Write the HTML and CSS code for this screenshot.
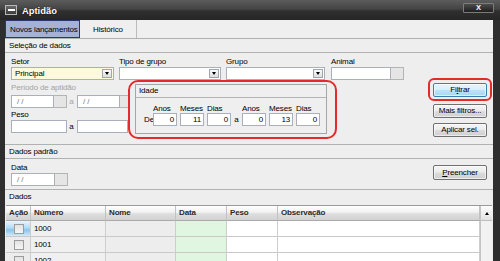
FILE: index.html
```html
<!DOCTYPE html>
<html lang="pt">
<head>
<meta charset="utf-8">
<title>Aptidão</title>
<link rel="stylesheet" href="styles.css">
</head>
<body>
<div class="window">
  <header class="titlebar">
    <span class="sysicon"><span class="sysbar"></span></span>
    <span class="title">Aptidão</span>
    <span class="closebtn">X</span>
  </header>
  <div class="frame">
    <main class="content">
      <nav class="tabs">
        <div class="tab active">Novos lançamentos</div>
        <div class="tab hist">Histórico</div>
      </nav>

      <div class="section-head">Seleção de dados</div>
      <section class="form">
        <div class="row1">
          <div class="field w-setor">
            <div class="lbl">Setor</div>
            <div class="input combo yellow"><span class="val">Principal</span><span class="dd"><span class="tri"></span></span></div>
          </div>
          <div class="field w-tipo">
            <div class="lbl">Tipo de grupo</div>
            <div class="input combo"><span class="val"></span><span class="dd"><span class="tri"></span></span></div>
          </div>
          <div class="field w-grupo">
            <div class="lbl">Grupo</div>
            <div class="input combo"><span class="val"></span><span class="dd"><span class="tri"></span></span></div>
          </div>
          <div class="field">
            <div class="lbl">Animal</div>
            <div class="inline"><div class="input w-animal"></div><div class="sbtn"></div></div>
          </div>
        </div>

        <div class="row2">
          <div class="leftcol">
            <div class="lbl disabled lbl-periodo">Período de aptidão</div>
            <div class="inline gap-top">
              <div class="input date w-date"><span class="val">/ /</span></div><div class="sbtn"></div>
              <span class="sep disabled">a</span>
              <div class="input date w-date"><span class="val">/ /</span></div><div class="sbtn narrow"></div>
            </div>
            <div class="lbl gap-top">Peso</div>
            <div class="inline">
              <div class="input w-peso1"></div>
              <span class="sep">a</span>
              <div class="input w-peso2"></div>
            </div>
          </div>

          <div class="highlight idade-hl">
            <div class="group">
              <div class="group-head">Idade</div>
              <div class="group-body">
                <span class="de">De</span>
                <div class="num"><div class="lbl2">Anos</div><div class="input numin">0</div></div>
                <div class="num"><div class="lbl2">Meses</div><div class="input numin">11</div></div>
                <div class="num"><div class="lbl2">Dias</div><div class="input numin">0</div></div>
                <span class="a-sep">a</span>
                <div class="num"><div class="lbl2">Anos</div><div class="input numin">0</div></div>
                <div class="num"><div class="lbl2">Meses</div><div class="input numin">13</div></div>
                <div class="num"><div class="lbl2">Dias</div><div class="input numin">0</div></div>
              </div>
            </div>
          </div>

          <div class="btncol">
            <div class="highlight filtrar-hl"><button class="btn primary">Fi<u>l</u>trar</button></div>
            <button class="btn btn-mais">Mais filtros...</button>
            <button class="btn btn-aplicar">Aplicar sel.</button>
          </div>
        </div>
      </section>

      <div class="section-head">Dados padrão</div>
      <section class="padrao">
        <div class="field">
          <div class="lbl">Data</div>
          <div class="inline"><div class="input date w-date2"><span class="val">/ /</span></div><div class="sbtn"></div></div>
        </div>
        <button class="btn btn-preencher"><u>P</u>reencher</button>
      </section>

      <div class="section-head nobottom">Dados</div>
      <section class="gridwrap">
        <div class="grid">
          <div class="hc">Ação</div>
          <div class="hc">Número</div>
          <div class="hc">Nome</div>
          <div class="hc">Data</div>
          <div class="hc">Peso</div>
          <div class="hc">Observação</div>

          <div class="c c-acao selected"><span class="chk"></span></div>
          <div class="c c-num">1000</div>
          <div class="c c-nome"></div>
          <div class="c c-data"></div>
          <div class="c c-peso"></div>
          <div class="c c-obs"></div>

          <div class="c c-acao"><span class="chk"></span></div>
          <div class="c c-num">1001</div>
          <div class="c c-nome"></div>
          <div class="c c-data"></div>
          <div class="c c-peso"></div>
          <div class="c c-obs"></div>

          <div class="c c-acao"><span class="chk"></span></div>
          <div class="c c-num">1002</div>
          <div class="c c-nome"></div>
          <div class="c c-data"></div>
          <div class="c c-peso"></div>
          <div class="c c-obs"></div>
        </div>
        <div class="vscroll">
          <div class="vs-up"><span class="uptri"></span></div>
        </div>
      </section>
    </main>
  </div>
</div>
</body>
</html>
```

FILE: styles.css
```css
* { box-sizing: border-box; }

html, body {
  margin: 0;
  padding: 0;
}

body {
  width: 500px;
  height: 261px;
  overflow: hidden;
  font-family: "Liberation Sans", Arial, sans-serif;
  font-size: 8px;
  letter-spacing: -0.15px;
  color: #000;
  background: #2e2e2e;
}

.window {
  width: 500px;
  height: 261px;
  display: flex;
  flex-direction: column;
  background: #2e2e2e;
}

/* ---------- title bar ---------- */
.titlebar {
  flex: none;
  height: 20px;
  display: flex;
  align-items: center;
  padding-left: 5px;
  background: linear-gradient(#5c5c5c, #444 45%, #2f2f2f 55%, #262626);
}

.sysicon {
  width: 12px;
  height: 10px;
  border: 1px solid #b8b8b8;
  background: linear-gradient(#6a6a6a, #3c3c3c);
  display: flex;
  align-items: center;
  justify-content: center;
}

.sysbar {
  width: 7px;
  height: 2px;
  background: #fff;
}

.title {
  margin-left: 5px;
  color: #fff;
  font-weight: bold;
  font-size: 9.4px;
  letter-spacing: 0;
  text-shadow: 0 0 1px #000;
}

.closebtn {
  margin-left: auto;
  margin-right: 6px;
  align-self: flex-start;
  margin-top: 3px;
  width: 31px;
  height: 10px;
  border: 1px solid #7c7c7c;
  border-radius: 1px;
  background: linear-gradient(#4d4d4d, #1e1e1e);
  color: #fff;
  font-weight: bold;
  font-size: 7.5px;
  line-height: 8px;
  text-align: center;
}

/* ---------- frame ---------- */
.frame {
  flex: 1;
  display: flex;
  min-height: 0;
  padding: 0 7px 0 5px;
  background: #2e2e2e;
}

.content {
  flex: 1;
  min-width: 0;
  display: flex;
  flex-direction: column;
  background: #eeeeee;
  overflow: hidden;
}

/* ---------- tabs ---------- */
.tabs {
  flex: none;
  height: 18px;
  display: flex;
  background: #efefef;
}

.tab {
  display: flex;
  align-items: center;
}

.tab.active {
  width: 75px;
  padding-left: 4px;
  border: 1px solid #27386e;
  background: #a5b2d5;
}

.tab.hist {
  width: 57px;
  justify-content: center;
  border-right: 1px solid #bcbcbc;
}

/* ---------- section heads ---------- */
.section-head {
  flex: none;
  height: 15px;
  line-height: 13px;
  padding-left: 4px;
  border-top: 1px solid #b1b1b1;
  border-bottom: 1px solid #b1b1b1;
  background: #eeeeee;
}

.section-head.nobottom {
  border-bottom: none;
  height: 16px;
  line-height: 14px;
}

/* ---------- form ---------- */
.form {
  flex: none;
  padding: 4px 1px 5px 6px;
}

.row1 {
  display: flex;
}

.field {
  display: flex;
  flex-direction: column;
}

.w-setor { width: 103px; }
.w-tipo { width: 102px; margin-left: 5px; }
.w-grupo { width: 99px; margin-left: 5px; }
.row1 .field:last-child { margin-left: 6px; }

.lbl {
  height: 10px;
  line-height: 10px;
  white-space: nowrap;
}

.lbl.disabled, .sep.disabled {
  color: #a3a3a3;
}

.inline {
  display: flex;
  align-items: center;
}

.gap-top { margin-top: 2px; }

.input {
  height: 13px;
  border: 1px solid #a9b0ba;
  background: #fff;
  line-height: 11px;
  white-space: nowrap;
  overflow: hidden;
}

.combo {
  display: flex;
  align-items: center;
  padding-left: 3px;
  padding-right: 1px;
}

.combo.yellow {
  background: #fdf9dd;
}

.combo .val {
  flex: 1;
}

.dd {
  width: 10px;
  height: 9px;
  border: 1px solid #a0a6ad;
  background: linear-gradient(#fafafa, #dedede);
  display: flex;
  align-items: center;
  justify-content: center;
}

.tri {
  width: 0;
  height: 0;
  border-left: 2.5px solid transparent;
  border-right: 2.5px solid transparent;
  border-top: 3px solid #000;
}

.w-animal { width: 60px; }

.sbtn {
  width: 13px;
  height: 13px;
  border: 1px solid #b4b4b4;
  border-left: none;
  background: #e5e5e5;
}

.sbtn.narrow { width: 8px; border-right: none; }

.date {
  padding-left: 5px;
  color: #7a7a7a;
}

.w-date { width: 43px; }
.w-date2 { width: 44px; }

.sep {
  width: 9px;
  margin-right: 1px;
  text-align: center;
}

.w-peso1 { width: 56px; }
.w-peso2 { width: 51px; }

.row2 {
  display: flex;
  align-items: flex-start;
}

.leftcol {
  width: 117px;
  flex: none;
  display: flex;
  flex-direction: column;
}

.lbl-periodo { margin-top: 3px; }

/* red annotation outlines */
.highlight {
  border: 2px solid #e52a2a;
}

.idade-hl {
  width: 209px;
  border-radius: 10px;
  padding: 2px 8px 3px 5px;
}

.group {
  border: 1px solid #a6a6a6;
  background: #efefef;
}

.group-head {
  height: 13px;
  line-height: 12px;
  padding-left: 3px;
  border-bottom: 1px solid #b4b4b4;
}

.group-body {
  display: flex;
  align-items: flex-end;
  padding: 6px 6px 7px 8px;
}

.de {
  width: 8px;
  height: 13px;
  line-height: 13px;
  margin-right: 1px;
  text-align: right;
}

.num {
  display: flex;
  flex-direction: column;
  margin-right: 3px;
}

.num:last-child { margin-right: 0; }

.lbl2 {
  height: 9px;
  line-height: 9px;
  white-space: nowrap;
}

.numin {
  width: 24px;
  text-align: right;
  padding-right: 2px;
}

.a-sep {
  width: 9px;
  height: 13px;
  line-height: 13px;
  text-align: center;
  margin-right: 3px;
}

/* buttons */
.btncol {
  margin-left: auto;
  margin-top: -2px;
  display: flex;
  flex-direction: column;
  align-items: center;
}

.filtrar-hl {
  width: 64px;
  border-radius: 6px;
  padding: 3px 3px 2px 3px;
}

.btn {
  width: 54px;
  height: 14px;
  padding: 0;
  margin: 0;
  font: inherit;
  letter-spacing: -0.15px;
  color: #000;
  border: 1px solid #707070;
  border-radius: 2px;
  background: linear-gradient(#f6f6f6, #ebebeb 48%, #dcdcdc 52%, #cfcfcf);
  box-shadow: inset 0 0 0 1px rgba(255,255,255,0.6);
  line-height: 12px;
  text-align: center;
}

.btn.primary {
  border-color: #3c7fb1;
  background: linear-gradient(#e9f5fd, #d6eefb 48%, #bde3f8 52%, #a6d6f2);
}

.btn-mais { margin-top: 3px; }
.btn-aplicar { margin-top: 5px; }

/* ---------- dados padrão ---------- */
.padrao {
  flex: none;
  height: 30px;
  display: flex;
  align-items: flex-start;
  padding: 4px 6px 0 6px;
}

.btn-preencher {
  margin-left: auto;
  margin-top: 2px;
  height: 15px;
  width: 54px;
}

/* ---------- grid ---------- */
.gridwrap {
  flex: 1;
  display: flex;
  margin: 0 1px 0 1px;
  border-top: 1px solid #9a9a9a;
  min-height: 0;
}

.grid {
  display: grid;
  grid-template-columns: 25px 75px 70px 51px 51px 202px;
  grid-template-rows: 15px;
  grid-auto-rows: 16px;
  align-content: start;
}

.hc {
  height: 15px;
  line-height: 14px;
  padding-left: 3px;
  font-weight: bold;
  color: #2a2a2a;
  background: linear-gradient(#ffffff, #f1f1f1 45%, #dedede 55%, #d2d2d2);
  border-right: 1px solid #c2c2c2;
  border-bottom: 1px solid #a9a9a9;
  white-space: nowrap;
}

.c {
  height: 16px;
  line-height: 15px;
  padding-left: 3px;
  border-right: 1px solid #cdcdcd;
  border-bottom: 1px solid #c9c9c9;
  background: #fff;
}

.c-acao {
  background: #ececec;
  display: flex;
  align-items: center;
  justify-content: center;
  padding-left: 2px;
}

.c-acao.selected {
  background: linear-gradient(#eaf5fd, #b7dbf5 45%, #8cc3ea 60%, #d5eaf8);
}

.c-num { background: #f0f0f0; }
.c-nome { background: #ededed; }
.c-data { background: #e1f6e1; }

.chk {
  width: 10px;
  height: 10px;
  border: 1px solid #9c9c9c;
  background: linear-gradient(#e2e2e2, #f6f6f6);
}

.vscroll {
  width: 12px;
  flex: none;
  background: #f2f2f2;
  border-left: 1px solid #c4c4c4;
}

.vs-up {
  height: 15px;
  border-bottom: 1px solid #bdbdbd;
  background: linear-gradient(#fdfdfd, #e2e2e2);
  display: flex;
  align-items: center;
  justify-content: center;
}

.uptri {
  width: 0;
  height: 0;
  border-left: 2.5px solid transparent;
  border-right: 2.5px solid transparent;
  border-bottom: 3px solid #000;
}
```
